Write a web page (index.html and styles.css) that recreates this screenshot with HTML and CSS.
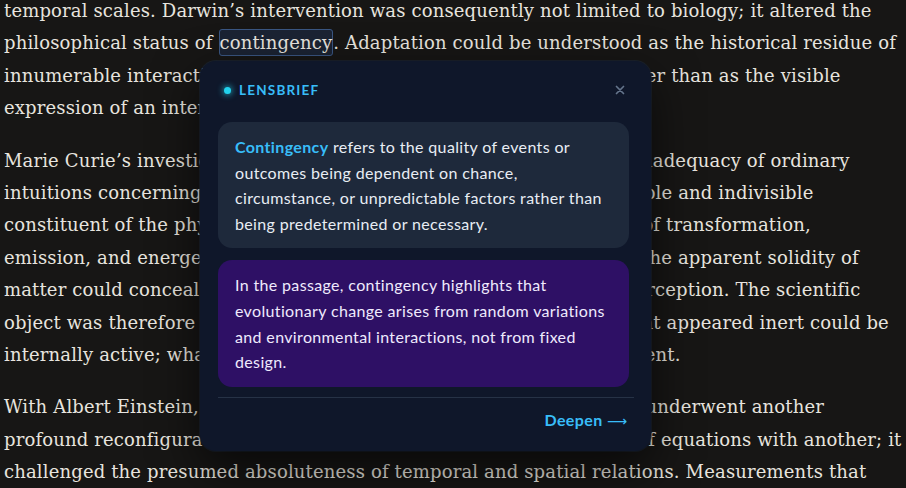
FILE: index.html
```html
<!DOCTYPE html>
<html lang="en">
<head>
<meta charset="utf-8">
<title>Reading — LensBrief</title>
<link rel="stylesheet" href="styles.css">
</head>
<body>
<main class="article">
  <p>temporal scales. Darwin’s intervention was consequently not limited to biology; it altered the<br>
  philosophical status of <span class="selected">contingency</span>. Adaptation could be understood as the historical residue of<br>
  innumerable interactions of variation, inheritance, and habitats, rather than as the visible<br>
  expression of an intentional order.</p>
  <p>Marie Curie’s investigations into radioactivity likewise exposed the inadequacy of ordinary<br>
  intuitions concerning matter itself. The atom, once imagined as a stable and indivisible<br>
  constituent of the physical world, eventually revealed itself as a site of transformation,<br>
  emission, and energetic release. Her rigorous research showed that the apparent solidity of<br>
  matter could conceal ceaseless processes unfolding beyond direct perception. The scientific<br>
  object was therefore no longer simply what could be seen or felt; what appeared inert could be<br>
  internally active; what seemed permanent could be essentially transient.</p>
  <p>With Albert Einstein, the existing conceptual architecture of physics underwent another<br>
  profound reconfiguration. Relativity did not simply displace one set of equations with another; it<br>
  challenged the presumed absoluteness of temporal and spatial relations. Measurements that</p>
</main>

<aside class="lens">
  <header class="lens-head">
    <span class="lens-dot"></span>
    <span class="lens-title">LensBrief</span>
    <svg class="lens-close" width="10" height="10" viewBox="0 0 10 10" aria-label="Close">
      <path d="M1.5 1.5 L8.5 8.5 M8.5 1.5 L1.5 8.5" stroke="#64748b" stroke-width="1.7" stroke-linecap="round"/>
    </svg>
  </header>
  <div class="lens-body">
    <div class="card card-def"><strong class="term">Contingency</strong> refers to the quality of events or outcomes being dependent on chance, circumstance, or unpredictable factors rather than being predetermined or necessary.</div>
    <div class="card card-ctx">In the passage, contingency highlights that evolutionary change arises from random variations and environmental interactions, not from fixed design.</div>
  </div>
  <footer class="lens-foot">
    <span class="deepen">Deepen <span class="arrow">⟶</span></span>
  </footer>
</aside>
</body>
</html>
```

FILE: styles.css
```css
html, body {
  margin: 0;
  padding: 0;
  background: #171615;
  overflow: hidden;
  height: 100%;
}

.article {
  margin-top: -5px;
  padding: 0 4px;
  font-family: "DejaVu Serif", "Liberation Serif", serif;
  font-size: 18px;
  letter-spacing: 0.15px;
  line-height: 32.4px;
  color: #e7e4df;
}

.article p {
  margin: 0 0 20px;
  white-space: nowrap;
}

.selected {
  background: #1b2333;
  border: 1px solid #3a5682;
  border-radius: 3px;
  padding: 2px 0;
}

.lens {
  position: absolute;
  left: 200px;
  top: 61px;
  width: 451px;
  box-sizing: border-box;
  padding: 19px 17px 19px 18px;
  background: #0f172a;
  border-radius: 16px;
  box-shadow: 0 18px 48px rgba(0, 0, 0, 0.6), 0 0 0 1px rgba(30, 41, 59, 0.6);
  font-family: Lato, "Noto Sans", sans-serif;
  color: #e2e8f0;
}

.lens-head {
  display: flex;
  align-items: center;
  height: 20px;
  padding: 0 9px 0 6px;
  margin-bottom: 22px;
}

.lens-dot {
  width: 7px;
  height: 7px;
  border-radius: 50%;
  background: #22d3ee;
  box-shadow: 0 0 6px 1px rgba(34, 211, 238, 0.7);
  margin-right: 8px;
}

.lens-title {
  font-size: 13.5px;
  font-weight: 700;
  letter-spacing: 1.2px;
  text-transform: uppercase;
  color: #38bdf8;
  flex: 1;
}

.lens-close {
  display: block;
}

.lens-body {
  display: flex;
  flex-direction: column;
  gap: 12px;
  margin-right: 5px;
}

.card {
  padding: 12px 17px;
  border-radius: 14px;
  font-size: 16px;
  letter-spacing: 0.35px;
  line-height: 25.6px;
}

.card-def {
  background: #1e293b;
  color: #e8edf4;
}

.term {
  color: #38bdf8;
  font-weight: 700;
}

.card-ctx {
  background: #2e1065;
  color: #efeafd;
}

.lens-foot {
  margin-top: 10px;
  border-top: 1px solid #263246;
  padding: 11px 7px 0 0;
  display: flex;
  justify-content: flex-end;
  line-height: 22px;
}

.deepen {
  font-size: 16px;
  font-weight: 700;
  letter-spacing: 0.4px;
  color: #38bdf8;
}

.arrow {
  font-family: "DejaVu Sans", sans-serif;
  font-weight: 400;
  font-size: 14px;
  letter-spacing: 0;
}
```
